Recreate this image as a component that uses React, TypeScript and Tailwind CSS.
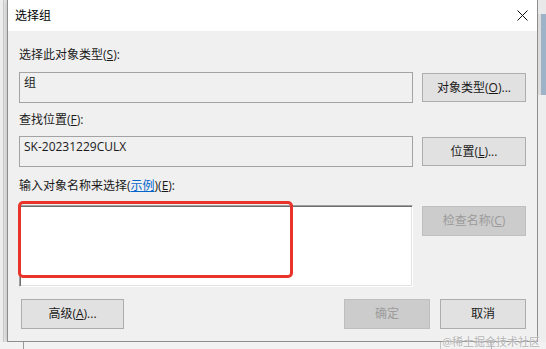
import React from 'react';

const font = { fontFamily: '"Open Sans", "Noto Sans CJK SC", sans-serif' };

const Btn: React.FC<{ w: string; disabled?: boolean; children: React.ReactNode }> = ({ w, disabled, children }) => (
  <div
    className={`${w} h-full flex items-center justify-center text-[12px] leading-[16px] border ${
      disabled ? 'bg-[#cccccc] border-[#bfbfbf] text-[#9b9b9b]' : 'bg-[#e1e1e1] border-[#adadad] text-[#1a1a1a]'
    }`}
  >
    {children}
  </div>
);

const Label: React.FC<{ className: string; children: React.ReactNode }> = ({ className, children }) => (
  <div className={`text-[12px] leading-[16px] text-[#1a1a1a] ${className}`}>{children}</div>
);

export default function App() {
  return (
    <div className="w-[546px] h-[349px] overflow-hidden relative bg-[#ececec] flex flex-col" style={font}>
      <div className="flex h-[342px]">
        {/* desktop behind, left */}
        <div className="w-[7px] h-full flex">
          <div className="w-[3px] bg-[#efefef]" />
          <div className="w-px bg-[#cfcfcf]" />
          <div className="flex-1 bg-[#e9e9e9]" />
        </div>

        {/* dialog */}
        <div className="w-[531px] h-full flex flex-col border-l border-r border-b border-[#8e8e8e] shadow-[0_0_6px_rgba(0,0,0,0.25)]">
          <div className="h-[31px] bg-white flex items-center justify-between pl-[7px] pr-[9px]">
            <span className="text-[12px] leading-[16px] text-black">选择组</span>
            <svg width="11" height="11" viewBox="0 0 11 11">
              <path d="M0.5 0.5L10.5 10.5M10.5 0.5L0.5 10.5" stroke="#111" strokeWidth="1" />
            </svg>
          </div>

          <div className="flex-1 bg-[#f0f0f0] px-[11px] flex flex-col">
            <Label className="mt-[16px]">
              选择此对象类型(<span className="underline">S</span>):
            </Label>
            <div className="mt-[9px] h-[31px] flex items-center gap-[9px]">
              <div className="w-[395px] h-full border border-[#a3a3a3] bg-[#f0f0f0] pl-[4px] pt-[2px] text-[12px] leading-[16px] text-[#1a1a1a]">
                组
              </div>
              <div className="h-[29px] flex">
                <Btn w="w-[104px]">
                  对象类型(<span className="underline">O</span>)...
                </Btn>
              </div>
            </div>

            <Label className="mt-[9px]">
              查找位置(<span className="underline">F</span>):
            </Label>
            <div className="mt-[8px] h-[31px] flex items-center gap-[9px]">
              <div className="w-[395px] h-full border border-[#a3a3a3] bg-[#f0f0f0] pl-[4px] pt-[2px] text-[12px] leading-[16px] text-[#1a1a1a]">
                SK-20231229CULX
              </div>
              <div className="h-[29px] flex">
                <Btn w="w-[104px]">
                  位置(<span className="underline">L</span>)...
                </Btn>
              </div>
            </div>

            <Label className="mt-[11px]">
              输入对象名称来选择(<span className="text-[#0066cc] underline">示例</span>)(<span className="underline">E</span>):
            </Label>
            <div className="mt-[11px] flex items-start gap-[9px]">
              <div className="relative w-[395px] h-[82px]">
                <div className="w-full h-full bg-white border-t border-l border-[#a0a0a0] border-r-white border-b-white border-r border-b shadow-[inset_1px_1px_0_#6d6d6d,inset_-1px_-1px_0_#e3e3e3]" />
                {/* red annotation */}
                <div className="absolute left-[-1px] top-[-4px] w-[275px] h-[77px] border-[3px] border-[#e8342b] rounded-[5px]" />
              </div>
              <div className="mt-px h-[30px] flex">
                <Btn w="w-[104px]" disabled>
                  检查名称(<span className="underline">C</span>)
                </Btn>
              </div>
            </div>

            <div className="mt-[12px] h-[30px] flex">
              <div className="ml-[2px] flex">
                <Btn w="w-[103px]">
                  高级(<span className="underline">A</span>)...
                </Btn>
              </div>
              <div className="flex-1" />
              <div className="flex gap-[10px]">
                <Btn w="w-[86px]" disabled>
                  确定
                </Btn>
                <Btn w="w-[86px]">取消</Btn>
              </div>
            </div>
          </div>
        </div>

        {/* desktop behind, right */}
        <div className="flex-1 flex flex-col">
          <div className="h-[14px] bg-[#e9e9e9]" />
          <div className="h-[81px] flex">
            <div className="w-[3px] bg-[#dcdcdc]" />
            <div className="flex-1 bg-[#9fb3c8]" />
          </div>
          <div className="flex-1 bg-[#eeeeee]" />
        </div>
      </div>

      {/* desktop behind, bottom */}
      <div className="flex-1 flex bg-[#f2f2f2]">
        <div className="w-[23px]" />
        <div className="w-px bg-[#9a9a9a]" />
        <div className="w-[416px]" />
        <div className="w-px bg-[#c4c4c4]" />
        <div className="w-[50px]" />
        <div className="w-px bg-[#a8a8a8]" />
      </div>

      <div className="absolute right-[6px] bottom-0 text-[11px] leading-[14px] text-[#b4b4b4] [text-shadow:0_0_2px_#ffffff]">
        @稀土掘金技术社区
      </div>
    </div>
  );
}
